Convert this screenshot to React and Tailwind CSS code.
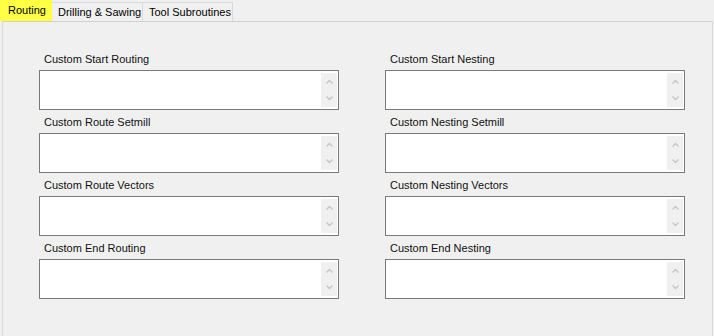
import React from 'react'

const rows = [
  ['Custom Start Routing', 'Custom Start Nesting'],
  ['Custom Route Setmill', 'Custom Nesting Setmill'],
  ['Custom Route Vectors', 'Custom Nesting Vectors'],
  ['Custom End Routing', 'Custom End Nesting'],
]

const Chevron = ({ down }) => (
  <svg width="9" height="6" viewBox="0 0 9 6" className="mx-auto">
    <path
      d={down ? 'M1.5 1.5 L4.5 4.5 L7.5 1.5' : 'M1.5 4.5 L4.5 1.5 L7.5 4.5'}
      fill="none"
      stroke="#c4c4c4"
      strokeWidth="1.3"
    />
  </svg>
)

const Field = ({ label }) => (
  <div className="w-[300px]">
    <div className="h-[13px] leading-[13px] pl-[5px] text-[11px] text-[#111]">{label}</div>
    <div className="mt-[4px] h-[40px] border border-[#7a7a7a] bg-white flex justify-end py-[2px] pr-[1px]">
      <div className="w-[16px] bg-[#f0f0f0] flex flex-col justify-between py-[6px]">
        <Chevron />
        <Chevron down />
      </div>
    </div>
  </div>
)

const App = () => {
  return (
    <div
      className="w-[714px] h-[336px] bg-[#f0f0f0] flex flex-col overflow-hidden"
      style={{ fontFamily: '"Liberation Sans", Arial, sans-serif' }}
    >
      <div className="flex items-end h-[21px] text-[11px] text-black">
        <div className="h-[21px] w-[52px] bg-[#ffff44] pl-[8px] pt-[4px] leading-[13px]">Routing</div>
        <div className="h-[19px] w-[91px] border-t border-r border-[#d9d9d9] pl-[6px] pt-[3px] leading-[13px]">Drilling &amp; Sawing</div>
        <div className="h-[19px] w-[90px] border-t border-r border-[#d9d9d9] pl-[6px] pt-[3px] leading-[13px]">Tool Subroutines</div>
      </div>
      <div className="flex-1 ml-[2px] mr-[1px] border-t border-l border-r border-[#d9d9d9] border-t-[#d0d0d0]">
        <div className="pt-[31px] pl-[36px] flex flex-col gap-[6px]">
          {rows.map(([a, b]) => (
            <div key={a} className="flex gap-[46px]">
              <Field label={a} />
              <Field label={b} />
            </div>
          ))}
        </div>
      </div>
    </div>
  )
}

export default App
